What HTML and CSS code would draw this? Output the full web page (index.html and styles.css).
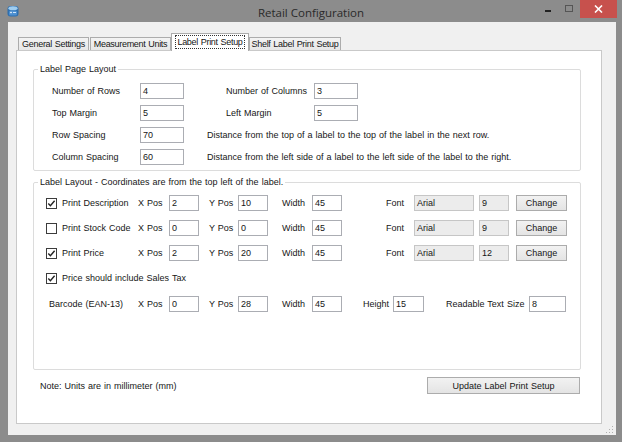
FILE: index.html
```html
<!DOCTYPE html>
<html>
<head>
<meta charset="utf-8">
<title>Retail Configuration</title>
<link rel="stylesheet" href="styles.css">
</head>
<body>
<div class="window">
  <div class="titlebar">
    <div class="tb-left">
      <svg class="app-icon" width="12" height="12" viewBox="0 0 12 12">
        <rect x="0.5" y="1" width="11" height="10.5" rx="3" fill="#2f6fae"/>
        <ellipse cx="6" cy="3.2" rx="4.6" ry="2" fill="#9fcdf0"/>
        <rect x="2" y="5.5" width="8" height="5" rx="1.5" fill="#4d8fd0"/>
        <path d="M3 7.5 L4 6.5 L5 7.5 L4 8.5 Z" fill="#ffffff"/>
        <rect x="6" y="7" width="3" height="1" fill="#cfe6fa"/>
      </svg>
    </div>
    <div class="title">Retail Configuration</div>
    <div class="tb-right">
      <div class="ctl ctl-min"><span class="min-bar"></span></div>
      <div class="ctl ctl-max"><span class="max-box"></span></div>
      <div class="ctl ctl-close">
        <svg width="9" height="8" viewBox="0 0 9 8"><path d="M1 0.5 L8 7.5 M8 0.5 L1 7.5" stroke="#ffffff" stroke-width="1.6"/></svg>
      </div>
    </div>
  </div>

  <div class="client">
    <div class="tabs">
      <div class="tab t-general">General Settings</div>
      <div class="tab t-units">Measurement Units</div>
      <div class="tab tab-active t-label"><span class="focus">Label Print Setup</span></div>
      <div class="tab t-shelf">Shelf Label Print Setup</div>
    </div>

    <div class="panel">
      <fieldset class="group group-page">
        <legend>Label Page Layout</legend>
        <div class="prow">
          <span class="plabel">Number of Rows</span>
          <span class="tbox wbox">4</span>
          <span class="plabel plabel2">Number of Columns</span>
          <span class="tbox wbox">3</span>
        </div>
        <div class="prow">
          <span class="plabel">Top Margin</span>
          <span class="tbox wbox">5</span>
          <span class="plabel plabel2">Left Margin</span>
          <span class="tbox wbox">5</span>
        </div>
        <div class="prow">
          <span class="plabel">Row Spacing</span>
          <span class="tbox wbox">70</span>
          <span class="desc">Distance from the top of a label to the top of the label in the next row.</span>
        </div>
        <div class="prow">
          <span class="plabel">Column Spacing</span>
          <span class="tbox wbox">60</span>
          <span class="desc">Distance from the left side of a label to the left side of the label to the right.</span>
        </div>
      </fieldset>

      <fieldset class="group group-layout">
        <legend>Label Layout - Coordinates are from the top left of the label.</legend>
        <div class="lrow">
          <span class="chkcell"><span class="chk on"><svg width="9" height="9" viewBox="0 0 9 9"><path d="M1.3 4.6 L3.4 6.8 L7.6 1.8" fill="none" stroke="#222" stroke-width="1.4"/></svg></span>Print Description</span>
          <span class="lx">X Pos</span><span class="tbox sbox">2</span>
          <span class="ly">Y Pos</span><span class="tbox sbox">10</span>
          <span class="lw">Width</span><span class="tbox sbox">45</span>
          <span class="lf">Font</span><span class="tbox fname">Arial</span><span class="tbox fsize">9</span>
          <span class="btn btn-change">Change</span>
        </div>
        <div class="lrow">
          <span class="chkcell"><span class="chk"></span>Print Stock Code</span>
          <span class="lx">X Pos</span><span class="tbox sbox">0</span>
          <span class="ly">Y Pos</span><span class="tbox sbox">0</span>
          <span class="lw">Width</span><span class="tbox sbox">45</span>
          <span class="lf">Font</span><span class="tbox fname">Arial</span><span class="tbox fsize">9</span>
          <span class="btn btn-change">Change</span>
        </div>
        <div class="lrow">
          <span class="chkcell"><span class="chk on"><svg width="9" height="9" viewBox="0 0 9 9"><path d="M1.3 4.6 L3.4 6.8 L7.6 1.8" fill="none" stroke="#222" stroke-width="1.4"/></svg></span>Print Price</span>
          <span class="lx">X Pos</span><span class="tbox sbox">2</span>
          <span class="ly">Y Pos</span><span class="tbox sbox">20</span>
          <span class="lw">Width</span><span class="tbox sbox">45</span>
          <span class="lf">Font</span><span class="tbox fname">Arial</span><span class="tbox fsize">12</span>
          <span class="btn btn-change">Change</span>
        </div>
        <div class="lrow lrow-tax">
          <span class="chkcell"><span class="chk on"><svg width="9" height="9" viewBox="0 0 9 9"><path d="M1.3 4.6 L3.4 6.8 L7.6 1.8" fill="none" stroke="#222" stroke-width="1.4"/></svg></span>Price should include Sales Tax</span>
        </div>
        <div class="lrow">
          <span class="chkcell bclabel">Barcode (EAN-13)</span>
          <span class="lx">X Pos</span><span class="tbox sbox">0</span>
          <span class="ly">Y Pos</span><span class="tbox sbox">28</span>
          <span class="lw">Width</span><span class="tbox sbox">45</span>
          <span class="lh">Height</span><span class="tbox sbox hbox">15</span>
          <span class="lr">Readable Text Size</span><span class="tbox rbox">8</span>
        </div>
      </fieldset>

      <div class="footer">
        <span class="note">Note: Units are in millimeter (mm)</span>
        <span class="btn btn-update">Update Label Print Setup</span>
      </div>
    </div>

    <svg class="grip" width="8" height="8" viewBox="0 0 8 8">
      <rect x="6" y="0" width="1" height="1" fill="#b0b0b0"/>
      <rect x="3" y="3" width="1" height="1" fill="#b0b0b0"/>
      <rect x="6" y="3" width="1" height="1" fill="#b0b0b0"/>
      <rect x="0" y="6" width="1" height="1" fill="#b0b0b0"/>
      <rect x="3" y="6" width="1" height="1" fill="#b0b0b0"/>
      <rect x="6" y="6" width="1" height="1" fill="#b0b0b0"/>
    </svg>
  </div>
</div>
</body>
</html>
```

FILE: styles.css
```css
* {
  box-sizing: border-box;
}

html,
body {
  margin: 0;
  padding: 0;
}

body {
  width: 622px;
  height: 442px;
  overflow: hidden;
  background: #8c8c8c;
  font-family: "Liberation Sans", Arial, sans-serif;
  font-size: 9px;
  word-spacing: 0.5px;
  color: #161616;
}

.window {
  width: 622px;
  height: 442px;
  display: flex;
  flex-direction: column;
}

/* ---------- title bar ---------- */
.titlebar {
  height: 22px;
  display: grid;
  grid-template-columns: 1fr auto 1fr;
  flex: none;
}

.tb-left {
  padding: 5px 0 0 7px;
}

.app-icon {
  display: block;
}

.title {
  font-family: "Open Sans", "Noto Sans", sans-serif;
  font-size: 11.5px;
  word-spacing: 0;
  line-height: 18px;
  padding-top: 4px;
  color: #2a2a2a;
}

.tb-right {
  display: flex;
  justify-content: flex-end;
  align-items: flex-start;
  padding-right: 5px;
}

.ctl {
  height: 18px;
  display: flex;
  align-items: center;
  justify-content: center;
}

.ctl-min {
  width: 18px;
  align-items: flex-start;
  padding-top: 10px;
  padding-right: 3px;
}

.min-bar {
  display: block;
  width: 6px;
  height: 2px;
  background: #222222;
}

.ctl-max {
  width: 22px;
  align-items: flex-start;
  padding-top: 5px;
}

.max-box {
  display: block;
  width: 8px;
  height: 7px;
  border: 1px solid #555555;
}

.ctl-close {
  width: 37px;
  background: #c7514d;
}

.ctl-close svg {
  display: block;
}

/* ---------- client area ---------- */
.client {
  flex: 1;
  margin: 0 6px 7px 8px;
  background: #f0f0f0;
  display: flex;
  flex-direction: column;
  padding: 12px 14px 11px 8px;
  position: relative;
}

.tabs {
  display: flex;
  height: 17px;
  padding-left: 2px;
  margin-bottom: -1px;
  align-items: flex-end;
}

.tab {
  height: 14px;
  border: 1px solid #acacac;
  border-bottom: none;
  background: linear-gradient(#f3f3f3, #e6e6e6);
  font-size: 9px;
  letter-spacing: -0.3px;
  word-spacing: 0.6px;
  line-height: 12px;
  text-align: center;
  white-space: nowrap;
  margin-right: 1px;
}

.t-general { width: 71px; }
.t-units { width: 81px; margin-right: 0; }
.t-label { width: 78px; margin-right: 0; }
.t-shelf { width: 92px; }

.tab-active {
  height: 18px;
  background: #ffffff;
  position: relative;
  z-index: 1;
  padding-top: 1px;
  line-height: 12px;
}

.focus {
  display: inline-block;
  border: 1px dotted #333333;
  padding: 0 1px;
  line-height: 12px;
}

.panel {
  height: 374px;
  background: #ffffff;
  border: 1px solid #c9c9c9;
  padding: 12px 0 0 16px;
  display: flex;
  flex-direction: column;
}

/* ---------- group boxes ---------- */
.group {
  width: 548px;
  margin: 0;
  border: 1px solid #dcdcdc;
  border-radius: 2px;
  min-inline-size: 0;
}

.group legend {
  padding: 0 2px;
  line-height: 12px;
  font-size: 9px;
}

.group-page {
  padding: 8px 0 5px 18px;
  display: flex;
  flex-direction: column;
  gap: 6px;
}

.group-page legend {
  margin-left: -14px;
}

.prow {
  display: flex;
  align-items: center;
  height: 16px;
  white-space: nowrap;
}

.plabel {
  width: 88px;
}

.plabel2 {
  margin-left: 42px;
}

.desc {
  margin-left: 23px;
}

.tbox {
  display: inline-block;
  height: 16px;
  border: 1px solid #abadb3;
  background: #ffffff;
  line-height: 14px;
  padding-left: 2px;
}

.wbox { width: 44px; }

.group-layout {
  margin-top: 5px;
  height: 194px;
  padding: 7px 0 0 12px;
}

.group-layout legend {
  margin-left: -8px;
}

.lrow {
  display: flex;
  align-items: center;
  height: 16px;
  margin-bottom: 9px;
  white-space: nowrap;
}

.lrow-tax {
  margin-top: 1px;
  margin-bottom: 10px;
}

.chkcell {
  width: 92px;
  display: flex;
  align-items: center;
}

.bclabel {
  padding-left: 3px;
}

.chk {
  width: 11px;
  height: 11px;
  border: 1px solid #3c3c3c;
  background: #ffffff;
  margin-right: 5px;
  display: flex;
  align-items: center;
  justify-content: center;
}

.chk svg {
  display: block;
}

.lx { width: 31px; }
.ly { width: 29px; margin-left: 10px; }
.lw { width: 30px; margin-left: 14px; }
.lf { width: 28px; margin-left: 44px; }
.lh { width: 30px; margin-left: 21px; }
.lr { width: 83px; margin-left: 22px; }

.sbox { width: 30px; }
.hbox { width: 31px; }
.rbox { width: 37px; }

.fname {
  width: 60px;
  background: #ececec;
  border-color: #c6c6c6;
}

.fsize {
  width: 30px;
  margin-left: 5px;
  background: #ececec;
  border-color: #c6c6c6;
}

.btn {
  display: inline-flex;
  align-items: center;
  justify-content: center;
  border: 1px solid #acacac;
  background: linear-gradient(#f2f2f2, #e4e4e4);
}

.btn-change {
  width: 51px;
  height: 16px;
  margin-left: 7px;
}

/* ---------- footer ---------- */
.footer {
  width: 548px;
  margin-top: 7px;
  display: flex;
  align-items: center;
  justify-content: space-between;
  padding: 0 1px 0 7px;
}

.btn-update {
  width: 153px;
  height: 17px;
}

.grip {
  position: absolute;
  right: 2px;
  bottom: 1px;
  display: block;
}
```
